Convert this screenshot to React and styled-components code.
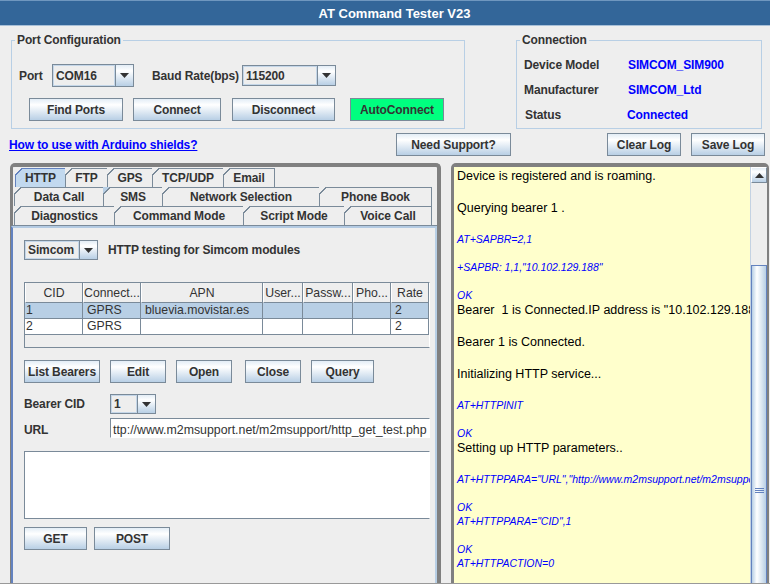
import React from 'react';
import styled, { createGlobalStyle } from 'styled-components';

const Global = createGlobalStyle`
  html, body {
    margin: 0;
    padding: 0;
    background: #eeeeee;
    overflow: hidden;
  }
  * {
    box-sizing: border-box;
  }
`;

const oceanGradient = 'linear-gradient(180deg, #e3edf6 0%, #ffffff 28%, #b8cfe5 100%)';
const lineColor = '#7a8a99';

const Page = styled.div`
  width: 770px;
  height: 584px;
  overflow: hidden;
  display: flex;
  flex-direction: column;
  background: #eeeeee;
  font-family: "Liberation Sans", Arial, sans-serif;
  font-size: 12px;
  letter-spacing: -0.12px;
  font-weight: bold;
  color: #333333;
  border-bottom: 1px solid #999999;
`;

const TitleBar = styled.div`
  height: 26px;
  flex: none;
  display: flex;
  align-items: center;
  justify-content: center;
  padding-left: 19px;
  background: #336699;
  border-top: 1px solid #6f97bf;
  border-bottom: 1px solid #a8c0d8;
  color: #ffffff;
  font-size: 13px;
  letter-spacing: 0;
`;

const TopRow = styled.div`
  display: flex;
  flex: none;
  gap: 51px;
  margin-top: 7px;
  padding-left: 11px;
`;

const Group = styled.fieldset`
  width: ${p => p.$width}px;
  height: 96px;
  margin: 0;
  min-width: 0;
  padding: 17px 0 0 7px;
  border: 1px solid #b8cfe5;

  legend {
    margin-left: -4px;
    padding: 0 2px;
    line-height: 14px;
  }
`;

const PortRow = styled.div`
  display: flex;
  align-items: center;
  height: 23px;
`;

const PortLabel = styled.span`
  width: ${p => p.$width}px;
  margin-left: ${p => p.$left || 0}px;
`;

const ButtonRow = styled.div`
  display: flex;
  gap: ${p => p.$gap || 10}px;
  margin-top: ${p => p.$top || 0}px;
  margin-left: ${p => p.$left || 0}px;
`;

const Button = styled.button`
  width: ${p => p.$width}px;
  height: 23px;
  flex: none;
  padding: 0;
  margin-left: ${p => p.$left || 0}px;
  border: 1px solid ${lineColor};
  border-radius: 0;
  background: ${p => (p.$green ? '#00ff7f' : oceanGradient)};
  font: inherit;
  letter-spacing: inherit;
  color: #333333;
  white-space: nowrap;
`;

const Combo = styled.div`
  display: flex;
  flex: none;
  width: ${p => p.$width}px;
  height: ${p => p.$height}px;
  border: 1px solid ${lineColor};
`;

const ComboValue = styled.div`
  flex: 1;
  display: flex;
  align-items: center;
  padding-left: 2px;
  background: #eeeeee;
  border: 1px solid #c4d6e8;
`;

const ComboArrow = styled.div`
  width: 18px;
  flex: none;
  display: flex;
  align-items: center;
  justify-content: center;
  background: ${oceanGradient};
  border-left: 1px solid ${lineColor};
`;

const InfoGrid = styled.div`
  display: grid;
  grid-template-columns: 104px 1fr;
  grid-auto-rows: 25px;
  align-items: center;
  margin-top: -12px;
`;

const InfoValue = styled.span`
  color: #0000ff;
  margin-left: ${p => p.$shift || 0}px;
`;

const StatusLabel = styled.span`
  margin-left: 1px;
`;

const LinkRow = styled.div`
  display: flex;
  flex: none;
  align-items: center;
  height: 23px;
  margin-top: 4px;
  padding: 0 5px 0 9px;
`;

const HelpLink = styled.a`
  width: 387px;
  flex: none;
  color: #0000ff;
  text-decoration: underline;
`;

const LogButtons = styled.div`
  display: flex;
  gap: 10px;
  margin-left: auto;
`;

const Main = styled.div`
  flex: 1;
  min-height: 0;
  display: flex;
  gap: 10px;
  margin-top: 7px;
  padding-left: 10px;
`;

const LeftPanel = styled.div`
  width: 431px;
  flex: none;
  display: flex;
  flex-direction: column;
  border-style: solid;
  border-color: #808080;
  border-width: 4px 4px 0 1px;
  border-radius: 5px 5px 0 0;
`;

const TabBlock = styled.div`
  flex: none;
  padding: 1px 0 0 1px;
  border-left: 2px solid #808080;
  border-bottom: 1px solid ${lineColor};
`;

const TabRow = styled.div`
  display: flex;
  height: 19px;
  padding-left: ${p => p.$left || 0}px;
`;

const Tab = styled.div`
  position: relative;
  width: ${p => p.$width}px;
  height: 19px;
  flex: none;
  display: flex;
  align-items: center;
  justify-content: center;
  margin-left: ${p => (p.$first ? 0 : -1)}px;
  padding-bottom: 1px;
  border: 1px solid ${p => (p.$active ? '#6382bf' : lineColor)};
  border-bottom: none;
  background: ${p => (p.$active ? '#c2d9ef' : '#eeeeee')};

  &::before {
    content: '';
    position: absolute;
    top: -1px;
    left: -1px;
    width: 7px;
    height: 7px;
    background: linear-gradient(
      135deg,
      ${p => p.$corner || '#eeeeee'} 0 46%,
      ${p => (p.$active ? '#6382bf' : lineColor)} 46% 58%,
      transparent 58%
    );
  }
`;

const Pane = styled.div`
  flex: 1;
  min-height: 0;
  padding: 12px 0 0 11px;
  border-style: solid;
  border-width: 2px 2px 0 2px;
  border-color: #b3cae2 #b8cfe5 #b8cfe5 #6382bf;
`;

const ModuleRow = styled.div`
  display: flex;
  align-items: center;
  gap: 10px;
  height: 20px;
`;

const TableFrame = styled.div`
  width: 406px;
  height: 66px;
  margin-top: 22px;
  background: #eeeeee;
  border: 1px solid ${lineColor};
  border-right-color: #ffffff;
  overflow: hidden;
`;

const BearerTable = styled.table`
  width: 404px;
  table-layout: fixed;
  border-collapse: separate;
  border-spacing: 0;
  font-size: 12.25px;
  letter-spacing: 0;
  font-weight: normal;
`;

const HeadCell = styled.th`
  width: ${p => p.$width}px;
  height: 20px;
  padding: 1px 0 0;
  overflow: hidden;
  font-weight: normal;
  text-align: center;
  white-space: nowrap;
  background: #eeeeee;
  border-right: 1px solid ${lineColor};
  border-bottom: 1px solid ${lineColor};
  border-left: 1px solid #ffffff;
`;

const Cell = styled.td`
  height: 16px;
  padding: 0 0 0 ${p => p.$pad}px;
  line-height: 15px;
  overflow: hidden;
  white-space: nowrap;
  background: ${p => (p.$selected ? '#b8cfe5' : '#ffffff')};
  border-right: 1px solid ${lineColor};
  border-bottom: 1px solid ${lineColor};
`;

const FieldRow = styled.div`
  display: flex;
  align-items: center;
  height: ${p => p.$height}px;
  margin-top: ${p => p.$top}px;
`;

const FieldLabel = styled.span`
  width: 86px;
  flex: none;
  padding-top: ${p => p.$drop || 0}px;
`;

const UrlField = styled.div`
  width: 320px;
  height: 20px;
  display: flex;
  align-items: center;
  padding: 3px 0 0 2px;
  background: #ffffff;
  border: 1px solid ${lineColor};
  border-right-color: #ffffff;
  border-bottom-color: #ffffff;
  font-size: 12.35px;
  letter-spacing: 0;
  font-weight: normal;
  white-space: nowrap;
  overflow: hidden;
`;

const ResponseBox = styled.div`
  width: 406px;
  height: 68px;
  margin-top: 13px;
  background: #ffffff;
  border: 1px solid ${lineColor};
  border-right-color: #ffffff;
`;

const RightPanel = styled.div`
  width: 318px;
  flex: none;
  display: flex;
  border-style: solid;
  border-color: #808080;
  border-width: 4px 2px 0 3px;
  border-radius: 5px 5px 0 0;
`;

const LogArea = styled.div`
  flex: 1;
  min-width: 0;
  padding: 1px 0 0 3px;
  overflow: hidden;
  background: #ffffcc;
  font-weight: normal;
  letter-spacing: 0;
  color: #000000;
`;

const LogLine = styled.div`
  height: 16px;
  line-height: 16px;
  font-size: 12.5px;
  white-space: pre;
`;

const AtLine = styled.div`
  height: 14px;
  line-height: 14px;
  font-size: 10.5px;
  font-style: italic;
  color: #0000ff;
  white-space: pre;
`;

const ScrollBar = styled.div`
  width: 17px;
  flex: none;
  display: flex;
  flex-direction: column;
  background: #eeeeee;
  border-left: 1px solid #c4d2e2;
`;

const ScrollUp = styled.div`
  height: 16px;
  flex: none;
  display: flex;
  align-items: center;
  justify-content: center;
  background: ${oceanGradient};
  border: 1px solid ${lineColor};
  border-top-color: #ffffff;
  border-left-color: #ffffff;
`;

const ScrollThumb = styled.div`
  flex: 1;
  margin-top: 82px;
  padding-top: 222px;
  display: flex;
  justify-content: center;
  background: linear-gradient(90deg, #b8cfe5 0%, #ffffff 35%, #b8cfe5 100%);
  border: 1px solid #6382bf;
  border-bottom: none;
`;

const Grip = styled.div`
  width: 9px;
  height: 5px;
  border-top: 1px solid #6382bf;
  border-bottom: 1px solid #6382bf;
  background: linear-gradient(#6382bf, #6382bf) center / 100% 1px no-repeat;
`;

const Arrow = ({ up }) => (
  <svg width="9" height="5" viewBox="0 0 9 5">
    <path d={up ? 'M0 5H9L4.5 0Z' : 'M0 0H9L4.5 5Z'} fill="#333333" />
  </svg>
);

const Select = ({ width, height, children }) => (
  <Combo $width={width} $height={height}>
    <ComboValue>{children}</ComboValue>
    <ComboArrow>
      <Arrow />
    </ComboArrow>
  </Combo>
);

const tabRows = [
  { left: 1, tabs: [['HTTP', 51], ['FTP', 43], ['GPS', 46], ['TCP/UDP', 72], ['Email', 52]] },
  { left: 0, tabs: [['Data Call', 90], ['SMS', 60], ['Network Selection', 158], ['Phone Book', 113]] },
  { left: 0, tabs: [['Diagnostics', 101], ['Command Mode', 130], ['Script Mode', 102], ['Voice Call', 88]] },
];

const columns = [
  ['CID', 58],
  ['Connect...', 58],
  ['APN', 122],
  ['User...', 40],
  ['Passw...', 50],
  ['Pho...', 38],
  ['Rate', 38],
];

const bearers = [
  { cid: '1', type: 'GPRS', apn: 'bluevia.movistar.es', rate: '2', selected: true },
  { cid: '2', type: 'GPRS', apn: '', rate: '2' },
];

const logLines = [
  ['t', 'Device is registered and is roaming.'],
  ['t', ' '],
  ['t', 'Querying bearer 1 .'],
  ['t', ' '],
  ['a', 'AT+SAPBR=2,1'],
  ['a', ' '],
  ['a', '+SAPBR: 1,1,"10.102.129.188"'],
  ['a', ' '],
  ['a', 'OK'],
  ['t', 'Bearer  1 is Connected.IP address is "10.102.129.188"'],
  ['t', ' '],
  ['t', 'Bearer 1 is Connected.'],
  ['t', ' '],
  ['t', 'Initializing HTTP service...'],
  ['t', ' '],
  ['a', 'AT+HTTPINIT'],
  ['a', ' '],
  ['a', 'OK'],
  ['t', 'Setting up HTTP parameters..'],
  ['t', ' '],
  ['a', 'AT+HTTPPARA="URL","http://www.m2msupport.net/m2msupport/http_get_test.php"'],
  ['a', ' '],
  ['a', 'OK'],
  ['a', 'AT+HTTPPARA="CID",1'],
  ['a', ' '],
  ['a', 'OK'],
  ['a', 'AT+HTTPACTION=0'],
];

export default function App() {
  return (
    <Page>
      <Global />
      <TitleBar>AT Command Tester V23</TitleBar>

      <TopRow>
        <Group $width={454}>
          <legend>Port Configuration</legend>
          <PortRow>
            <PortLabel $width={33}>Port</PortLabel>
            <Select width={82} height={23}>COM16</Select>
            <PortLabel $width={90} $left={18}>Baud Rate(bps)</PortLabel>
            <Select width={94} height={21}>115200</Select>
          </PortRow>
          <ButtonRow $top={11} $left={10}>
            <Button $width={94}>Find Ports</Button>
            <Button $width={88}>Connect</Button>
            <Button $width={103} $left={1}>Disconnect</Button>
            <Button $width={94} $green $left={5}>AutoConnect</Button>
          </ButtonRow>
        </Group>
        <Group $width={246}>
          <legend>Connection</legend>
          <InfoGrid>
            <span>Device Model</span>
            <InfoValue>SIMCOM_SIM900</InfoValue>
            <span>Manufacturer</span>
            <InfoValue>SIMCOM_Ltd</InfoValue>
            <StatusLabel>Status</StatusLabel>
            <InfoValue $shift={-1}>Connected</InfoValue>
          </InfoGrid>
        </Group>
      </TopRow>

      <LinkRow>
        <HelpLink href="#">How to use with Arduino shields?</HelpLink>
        <Button $width={115}>Need Support?</Button>
        <LogButtons>
          <Button $width={74}>Clear Log</Button>
          <Button $width={74}>Save Log</Button>
        </LogButtons>
      </LinkRow>

      <Main>
        <LeftPanel>
          <TabBlock>
            {tabRows.map(row => (
              <TabRow key={row.tabs[0][0]} $left={row.left}>
                {row.tabs.map(([label, width], i) => (
                  <Tab
                    key={label}
                    $width={width}
                    $first={i === 0}
                    $active={label === 'HTTP'}
                    $corner={label === 'SMS' ? '#b8cfe5' : undefined}
                  >
                    {label}
                  </Tab>
                ))}
              </TabRow>
            ))}
          </TabBlock>

          <Pane>
            <ModuleRow>
              <Select width={74} height={20}>Simcom</Select>
              <span>HTTP testing for Simcom modules</span>
            </ModuleRow>

            <TableFrame>
              <BearerTable>
                <thead>
                  <tr>
                    {columns.map(([label, width]) => (
                      <HeadCell key={label} $width={width}>{label}</HeadCell>
                    ))}
                  </tr>
                </thead>
                <tbody>
                  {bearers.map(b => (
                    <tr key={b.cid}>
                      <Cell $pad={1} $selected={b.selected}>{b.cid}</Cell>
                      <Cell $pad={4} $selected={b.selected}>{b.type}</Cell>
                      <Cell $pad={4} $selected={b.selected}>{b.apn}</Cell>
                      <Cell $pad={1} $selected={b.selected} />
                      <Cell $pad={1} $selected={b.selected} />
                      <Cell $pad={1} $selected={b.selected} />
                      <Cell $pad={4} $selected={b.selected}>{b.rate}</Cell>
                    </tr>
                  ))}
                </tbody>
              </BearerTable>
            </TableFrame>

            <ButtonRow $top={12} $gap={10}>
              <Button $width={76}>List Bearers</Button>
              <Button $width={56}>Edit</Button>
              <Button $width={56}>Open</Button>
              <Button $width={56} $left={3}>Close</Button>
              <Button $width={63}>Query</Button>
            </ButtonRow>

            <FieldRow $height={20} $top={11}>
              <FieldLabel>Bearer CID</FieldLabel>
              <Select width={46} height={20}>1</Select>
            </FieldRow>
            <FieldRow $height={20} $top={4}>
              <FieldLabel $drop={3}>URL</FieldLabel>
              <UrlField>ttp://www.m2msupport.net/m2msupport/http_get_test.php</UrlField>
            </FieldRow>

            <ResponseBox />

            <ButtonRow $top={8} $gap={7}>
              <Button $width={63}>GET</Button>
              <Button $width={76}>POST</Button>
            </ButtonRow>
          </Pane>
        </LeftPanel>

        <RightPanel>
          <LogArea>
            {logLines.map(([kind, text], i) =>
              kind === 't' ? <LogLine key={i}>{text}</LogLine> : <AtLine key={i}>{text}</AtLine>
            )}
          </LogArea>
          <ScrollBar>
            <ScrollUp>
              <Arrow up />
            </ScrollUp>
            <ScrollThumb>
              <Grip />
            </ScrollThumb>
          </ScrollBar>
        </RightPanel>
      </Main>
    </Page>
  );
}
